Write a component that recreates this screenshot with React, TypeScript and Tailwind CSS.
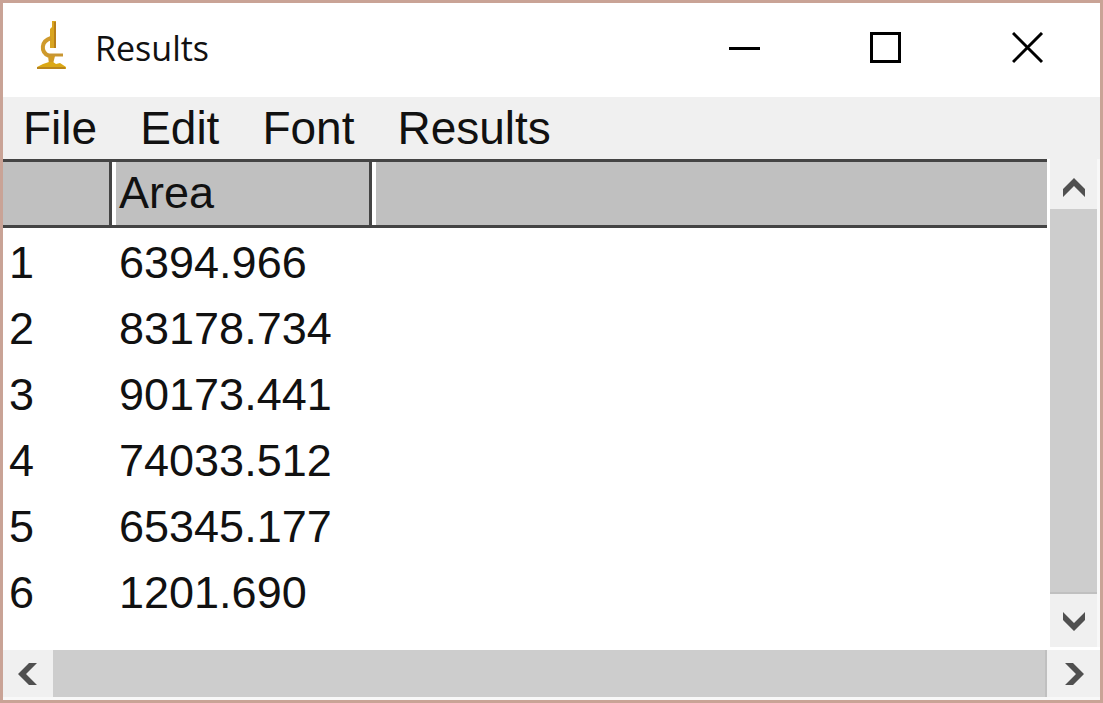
import React from "react";

const MENUS = ["File", "Edit", "Font", "Results"];

const AREAS = ["6394.966", "83178.734", "90173.441", "74033.512", "65345.177", "1201.690"];

const Microscope = () => (
  <svg className="h-[54px] w-8" viewBox="0 0 32 54" fill="none" aria-hidden="true">
    <path d="M17 0h4v27h-6V8l2-2z" fill="#d9a520" />
    <path d="M20 1v26" stroke="#b87f1a" strokeWidth="2" />
    <path d="M16 17C6 20 5 31 14 35" stroke="#cf9a2c" strokeWidth="4" />
    <path d="M12 34h16" stroke="#c89632" strokeWidth="3" />
    <path d="M13 35h7l-2 8h-4z" fill="#d09a24" />
    <path d="M2 48v-2l6-3 6-2h4l3 2 4-1 6 4v2z" fill="#dba815" />
    <path d="M2 47h28" stroke="#b9851c" strokeWidth="2" />
  </svg>
);

const WindowButton = (props: { label: string; className: string; children: React.ReactNode }) => (
  <button
    type="button"
    aria-label={props.label}
    className={`flex h-full items-center justify-center hover:bg-gray-200 ${props.className}`}
  >
    <svg className="size-8" viewBox="0 0 32 32" fill="none" stroke="#000" strokeWidth="3">
      {props.children}
    </svg>
  </button>
);

const ScrollButton = (props: { label: string; className: string; points: string }) => (
  <button
    type="button"
    aria-label={props.label}
    className={`flex shrink-0 items-center justify-center bg-[#f0f0f0] ${props.className}`}
  >
    <svg className="size-6" viewBox="0 0 24 24" fill="#505050">
      <polygon points={props.points} />
    </svg>
  </button>
);

const TitleBar = () => (
  <header className="flex h-[94px] shrink-0 items-center bg-white pb-1 pl-8">
    <Microscope />
    <h1 className="ml-7 flex-1 font-['Open_Sans',sans-serif] text-[34px] leading-[48px]">
      Results
    </h1>
    <WindowButton label="Minimize" className="w-[141px]">
      <path d="M0 16.5h31" />
    </WindowButton>
    <WindowButton label="Maximize" className="w-[141px]">
      <path d="M1.5 1.5h28v28h-28z" />
    </WindowButton>
    <WindowButton label="Close" className="w-36">
      <path d="M1 1l29 29M30 1l-29 29" />
    </WindowButton>
  </header>
);

const MenuBar = () => (
  <nav className="flex h-[62px] shrink-0 items-center gap-[43px] bg-[#f0f0f0] pl-5 text-[46px] leading-[60px]">
    {MENUS.map((menu) => (
      <button key={menu} type="button">
        {menu}
      </button>
    ))}
  </nav>
);

const ResultsTable = () => (
  <table className="w-full table-fixed border-separate border-spacing-0 text-left text-[45px] leading-[62px]">
    <colgroup>
      <col className="w-[109px]" />
      <col className="w-[260px]" />
      <col />
    </colgroup>
    <thead>
      <tr className="bg-[#c0c0c0]">
        <th aria-label="Row" className="border-y-[3px] border-r-[3px] border-[#444] p-0" />
        <th className="border-y-[3px] border-r-[3px] border-[#444] p-0 font-normal">
          <div className="h-[63px] border-l-4 border-white pl-[3px]">Area</div>
        </th>
        <td className="border-y-[3px] border-[#444] p-0">
          <div className="h-[63px] border-l-4 border-white" />
        </td>
      </tr>
    </thead>
    <tbody>
      {AREAS.map((area, i) => (
        <tr key={area}>
          <td className="p-0 pt-1 pl-1.5">{i + 1}</td>
          <td className="p-0 pt-1 pl-[7px]">{area}</td>
          <td className="p-0" />
        </tr>
      ))}
    </tbody>
  </table>
);

export default function App() {
  return (
    <div className="flex min-h-screen flex-col border-[3px] border-[#c9a396] bg-white font-['Liberation_Sans',Arial,sans-serif] text-[#111]">
      <TitleBar />
      <MenuBar />
      <main className="flex flex-1">
        <div className="min-w-0 flex-1">
          <ResultsTable />
        </div>
        <div className="ml-[3px] flex w-[50px] flex-col border-r-[3px] border-[#f8f8f8]">
          <ScrollButton
            label="Scroll up"
            className="h-[50px] pt-2"
            points="12,2 23,13 23,21 12,10 1,21 1,13"
          />
          <div className="flex-1 border-b-2 border-[#c0c0c0] bg-[#cdcdcd]" />
          <ScrollButton
            label="Scroll down"
            className="h-[53px]"
            points="12,22 23,11 23,3 12,14 1,3 1,11"
          />
        </div>
      </main>
      <div className="mt-[3px] flex h-[50px] shrink-0 border-b-[3px] border-[#f8f8f8]">
        <ScrollButton
          label="Scroll left"
          className="w-[50px]"
          points="2,12 13,1 21,1 10,12 21,23 13,23"
        />
        <div className="flex-1 border-r-2 border-[#c0c0c0] bg-[#cdcdcd]" />
        <ScrollButton
          label="Scroll right"
          className="w-[53px]"
          points="22,12 11,1 3,1 14,12 3,23 11,23"
        />
      </div>
    </div>
  );
}
